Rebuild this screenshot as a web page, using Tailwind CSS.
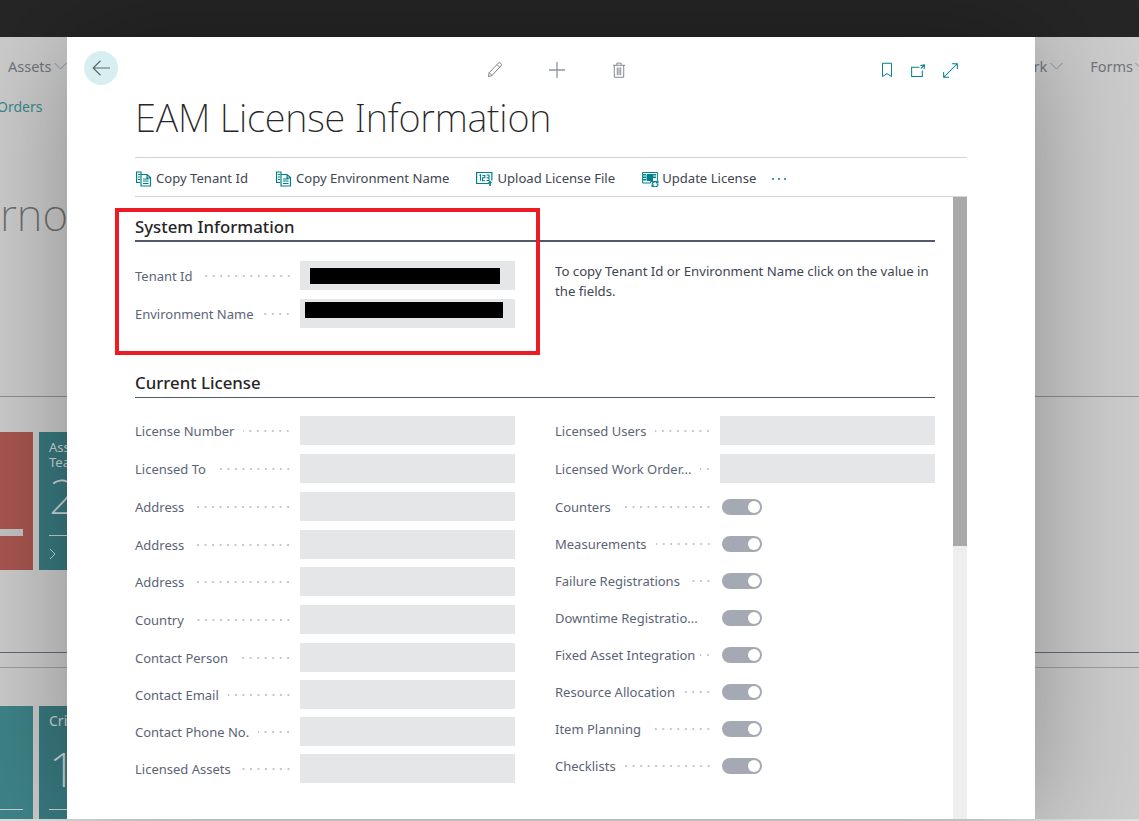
<!DOCTYPE html>
<html lang="en">
<head>
<meta charset="utf-8">
<title>EAM License Information</title>
<script src="https://cdn.jsdelivr.net/npm/@tailwindcss/browser@4"></script>
</head>
<body class="m-0 h-[821px] w-[1139px] overflow-hidden bg-[#cdcdcd] font-['Noto_Sans','Open_Sans',sans-serif]">
<div class="relative flex h-[821px] w-[1139px] flex-col overflow-hidden">
  <header class="h-[37px] shrink-0 bg-[#262626]"></header>

  <!-- dimmed page behind the dialog -->
  <div class="relative flex-1 overflow-hidden text-[#6f7680]">
    <div class="flex h-[60px] items-start justify-between pt-[19px] text-[14.500px] leading-5">
      <div class="flex items-center gap-[2px] pl-2"><span>Assets</span><svg class="h-[8px] w-[13px]" viewBox="0 0 13 8" fill="none" stroke="#8a8f96"><path d="M.5 1l6 6 6-6"/></svg></div>
      <div class="flex items-center">
        <span>ork</span><svg class="ml-[3px] h-[8px] w-[13px]" viewBox="0 0 13 8" fill="none" stroke="#8a8f96"><path d="M.5 1l6 6 6-6"/></svg>
        <span class="ml-[27px]">Forms</span><svg class="ml-[2px] mr-[-9px] h-[8px] w-[13px]" viewBox="0 0 13 8" fill="none" stroke="#8a8f96"><path d="M.5 1l6 6 6-6"/></svg>
      </div>
    </div>
    <div class="ml-[-3px] text-sm leading-5 text-[#3d8a8a]">Orders</div>
    <div class="mt-[72px] text-[44px] font-extralight leading-[50px] text-[#6f6f6f]">rno</div>
    <div class="mt-[157px] h-px bg-[#8f8f8f]"></div>
    <div class="mt-[35px] flex h-[138px] gap-[6px]">
      <div class="relative w-[33px] bg-[#a9564f]"><div class="absolute bottom-[34px] left-0 h-[7px] w-[23px] bg-[#c4c4c4]"></div></div>
      <div class="w-[100px] bg-[#397a80] pl-[10px] pt-[8px] text-[13px] leading-[15px] text-[#cfd8d8]">
        <div>Assets</div><div>Team</div>
        <div class="mt-[2px] text-[48px] font-extralight leading-[48px]">2</div>
        <div class="mt-[15px] h-px bg-[#c9d3d3]"></div>
        <svg class="mt-[12px] h-[12px] w-[8px]" viewBox="0 0 8 12" fill="none" stroke="#c9d3d3"><path d="M1 1l5 5-5 5"/></svg>
      </div>
    </div>
    <div class="mt-[82px] h-px bg-[#616a78]"></div>
    <div class="mt-[14px] h-px bg-[#a0a0a0]"></div>
    <div class="mt-[38px] flex h-[113px] gap-[6px]">
      <div class="flex w-[33px] flex-col justify-end bg-[#3e8489] pb-[9px] pr-[10px]"><div class="h-px bg-[#c9d3d3]"></div></div>
      <div class="flex w-[100px] flex-col bg-[#397a80] pb-[9px] pl-[10px] pt-[5px] text-sm text-[#cfd8d8]">
        <div>Critical</div>
        <div class="mt-[14px] text-[48px] font-extralight leading-[48px]">1</div>
        <div class="mt-auto h-px bg-[#c9d3d3]"></div>
      </div>
    </div>
  </div>
  <div class="absolute bottom-0 left-0 h-[2px] w-full bg-[#e0e0e0]"></div>

  <!-- dialog -->
  <main class="absolute left-[67px] top-[37px] flex h-[782px] w-[968px] flex-col bg-white pl-[68px] pr-[68px] shadow-[0_0_110px_rgba(0,0,0,0.32)]">
    <button class="absolute left-[17px] top-[14px] flex h-[34px] w-[34px] items-center justify-center rounded-full bg-[#d8eff2]">
      <svg class="h-[16px] w-[18px]" viewBox="0 0 18 16" fill="none" stroke="#5f6b6e" stroke-width="1.2"><path d="M1 8h17M8.500.8L1.200 8l7.300 7.200"/></svg>
    </button>

    <div class="relative flex h-[44px] shrink-0 items-end justify-center pb-[3px] pl-[10px]">
      <div class="flex items-center">
        <svg class="h-[16px] w-[16px]" viewBox="0 0 18 18" fill="none" stroke="#7d8288" stroke-width="1.100"><path d="M1.500 16.500l1-4.500L12.500 1.500c1-.9 2-.9 3 0s1 2 0 3L5.500 15.300zM2.500 12l3.300 3.300M11.300 3l3.400 3.400"/></svg>
        <svg class="ml-[46px] h-[16px] w-[16px]" viewBox="0 0 16 16" fill="none" stroke="#90959b" stroke-width="1.300"><path d="M8 0v16M0 8h16"/></svg>
        <svg class="ml-[48px] h-[16px] w-[12px]" viewBox="0 0 14 18" fill="none" stroke="#7d8288" stroke-width="1.100"><path d="M0 3.500h14M4.500 3.500V1h5v2.500M1.500 3.500v14h11v-14M5 6v9M7 6v9M9 6v9"/></svg>
      </div>
      <div class="absolute right-[9px] top-[25px] flex items-center">
        <svg class="h-[16px] w-[10px]" viewBox="0 0 11 16" fill="none" stroke="#00818a" stroke-width="1.100"><path d="M.6.6h9.800v14.600L5.500 12 .6 15.200z"/></svg>
        <svg class="ml-[19px] h-[13px] w-[15px]" viewBox="0 0 16 14" fill="none" stroke="#00818a" stroke-width="1.100"><path d="M9 3.500H.6v9.900h11.500V7M10 1.500l4.500-.5-.5 4.500M14.300 1.300L10.500 5"/></svg>
        <svg class="ml-[17px] h-[15px] w-[15px]" viewBox="0 0 16 16" fill="none" stroke="#00818a" stroke-width="1.100"><path d="M.8 15.200L15.200.8M9.500.7h5.800v5.800M.7 9.500v5.800h5.800"/></svg>
      </div>
    </div>

    <h1 class="h-[76px] shrink-0 whitespace-nowrap pt-[8px] text-[38px] font-extralight leading-[56px] tracking-[-0.2px] text-[#262626]">EAM License Information</h1>

    <nav class="flex h-[40px] shrink-0 items-center border-y border-[#d2d4d8] pt-[4px] text-[13.100px] text-[#3e4652]">
      <div class="ml-[1px] flex items-center gap-[4px]">
        <svg class="h-[16px] w-[16px]" viewBox="0 0 16 16" fill="none" stroke="#00818a" stroke-width="1.200"><path d="M5 3.500V1H.6v10.500h3.500M2 3.500h2M2 6h2M2 8.500h2"/><path d="M5 3.500h6l3.500 3V15H5zM7 8h5.500M7 10h5.500M7 12.500h5.500M11 3.500V7h3.500" /></svg>
        <span>Copy Tenant Id</span>
      </div>
      <div class="ml-[28px] flex items-center gap-[4px]">
        <svg class="h-[16px] w-[16px]" viewBox="0 0 16 16" fill="none" stroke="#00818a" stroke-width="1.200"><path d="M5 3.500V1H.6v10.500h3.500M2 3.500h2M2 6h2M2 8.500h2"/><path d="M5 3.500h6l3.500 3V15H5zM7 8h5.500M7 10h5.500M7 12.500h5.500M11 3.500V7h3.500" /></svg>
        <span>Copy Environment Name</span>
      </div>
      <div class="ml-[27px] flex items-center gap-[4px]">
        <svg class="h-[16px] w-[17px]" viewBox="0 0 17 16" fill="none" stroke="#00818a" stroke-width="1.200"><path d="M13 12.500H.6V1.500h15.300v8"/><path d="M3.500 4.500l1-.7v6M6.500 4.500h2.300v2.200H6.500v3h2.500M10.500 4h2.500v5.500h-2.500M10.500 6.700h2.500" stroke-width="1.100"/><path d="M14 9.500l2 2.500h-1.200v3h-1.600v-3H12z" fill="#00818a" stroke="none"/></svg>
        <span>Upload License File</span>
      </div>
      <div class="ml-[27px] flex items-center gap-[3px]">
        <svg class="h-[16px] w-[17px]" viewBox="0 0 17 16" fill="none" stroke="#00818a"><path d="M.6 1.500h14.800v9H8.500v1.500H.6z"/><path d="M5 3.500h5.500v6H5z" fill="#00818a"/><path d="M2.500 3v7.500M12.500 3v5" stroke-width="3" stroke-dasharray="1.500 1"/><path d="M10 13.500a3.200 3.200 0 0 1 5.500-1.800M16 13a3.200 3.200 0 0 1-5.500 2" stroke-width="1.300"/><path d="M16.500 9.500v3h-3zM9.500 16.500v-3h3z" fill="#00818a" stroke="none"/></svg>
        <span>Update License</span>
      </div>
      <div class="ml-[16px] flex items-center gap-[4px] pb-[1px]">
        <span class="h-[2px] w-[2px] rounded-full bg-[#00818a]"></span><span class="h-[2px] w-[2px] rounded-full bg-[#00818a]"></span><span class="h-[2px] w-[2px] rounded-full bg-[#00818a]"></span>
      </div>
    </nav>

    <div class="flex min-h-0 flex-1">
      <div class="min-w-0 flex-1 pr-[18px] text-[13px] text-[#5b6477]">
        <section class="pt-[18px]">
          <h2 class="h-[27px] border-b-2 border-[#505a6b] text-[16.800px] font-medium leading-[24px] text-[#262626]">System Information</h2>
          <div class="mt-[19px] grid grid-cols-2 gap-x-[40px]">
            <div class="flex flex-col gap-[9px]">
              <div class="flex h-[29px] items-center">
                <span class="whitespace-nowrap pt-[2px]">Tenant Id</span>
                <span class="ml-[9px] mr-[8px] h-[4px] flex-1 bg-[radial-gradient(circle,#c3c7cd_0.8px,transparent_1.1px)] bg-[length:7.500px_4px] bg-right bg-repeat-x"></span>
                <div class="flex h-[29px] w-[215px] shrink-0 items-center bg-[#e5e6e8] pl-[10px]"><div class="h-[16px] w-[190px] bg-black"></div></div>
              </div>
              <div class="flex h-[29px] items-center">
                <span class="whitespace-nowrap pt-[2px]">Environment Name</span>
                <span class="ml-[9px] mr-[8px] h-[4px] flex-1 bg-[radial-gradient(circle,#c3c7cd_0.8px,transparent_1.1px)] bg-[length:7.500px_4px] bg-right bg-repeat-x"></span>
                <div class="flex h-[29px] w-[215px] shrink-0 items-start bg-[#e5e6e8] pl-[5px] pt-[3px]"><div class="h-[16px] w-[198px] bg-black"></div></div>
              </div>
            </div>
            <p class="text-[13.200px] leading-[20px] text-[#3e4652]">To copy Tenant Id or Environment Name click on the value in the fields.</p>
          </div>
        </section>

        <section class="mt-[44px]">
          <h2 class="h-[26px] border-b border-[#505a6b] text-[16.800px] font-medium leading-[22px] text-[#262626]">Current License</h2>
          <div class="mt-[18px] grid grid-cols-2 gap-x-[40px]">
            <div class="flex flex-col">
              <div class="flex h-[29px] items-center"><span class="whitespace-nowrap pt-[2px]">License Number</span><span class="ml-[9px] mr-[8px] h-[4px] flex-1 bg-[radial-gradient(circle,#c3c7cd_0.8px,transparent_1.1px)] bg-[length:7.500px_4px] bg-right bg-repeat-x"></span><div class="h-[29px] w-[215px] shrink-0 bg-[#e5e6e8]"></div></div>
              <div class="mt-[9px] flex h-[29px] items-center"><span class="whitespace-nowrap pt-[2px]">Licensed To</span><span class="ml-[9px] mr-[8px] h-[4px] flex-1 bg-[radial-gradient(circle,#c3c7cd_0.8px,transparent_1.1px)] bg-[length:7.500px_4px] bg-right bg-repeat-x"></span><div class="h-[29px] w-[215px] shrink-0 bg-[#e5e6e8]"></div></div>
              <div class="mt-[9px] flex h-[29px] items-center"><span class="whitespace-nowrap pt-[2px]">Address</span><span class="ml-[9px] mr-[8px] h-[4px] flex-1 bg-[radial-gradient(circle,#c3c7cd_0.8px,transparent_1.1px)] bg-[length:7.500px_4px] bg-right bg-repeat-x"></span><div class="h-[29px] w-[215px] shrink-0 bg-[#e5e6e8]"></div></div>
              <div class="mt-[9px] flex h-[29px] items-center"><span class="whitespace-nowrap pt-[2px]">Address</span><span class="ml-[9px] mr-[8px] h-[4px] flex-1 bg-[radial-gradient(circle,#c3c7cd_0.8px,transparent_1.1px)] bg-[length:7.500px_4px] bg-right bg-repeat-x"></span><div class="h-[29px] w-[215px] shrink-0 bg-[#e5e6e8]"></div></div>
              <div class="mt-[8px] flex h-[29px] items-center"><span class="whitespace-nowrap pt-[2px]">Address</span><span class="ml-[9px] mr-[8px] h-[4px] flex-1 bg-[radial-gradient(circle,#c3c7cd_0.8px,transparent_1.1px)] bg-[length:7.500px_4px] bg-right bg-repeat-x"></span><div class="h-[29px] w-[215px] shrink-0 bg-[#e5e6e8]"></div></div>
              <div class="mt-[9px] flex h-[29px] items-center"><span class="whitespace-nowrap pt-[2px]">Country</span><span class="ml-[9px] mr-[8px] h-[4px] flex-1 bg-[radial-gradient(circle,#c3c7cd_0.8px,transparent_1.1px)] bg-[length:7.500px_4px] bg-right bg-repeat-x"></span><div class="h-[29px] w-[215px] shrink-0 bg-[#e5e6e8]"></div></div>
              <div class="mt-[9px] flex h-[29px] items-center"><span class="whitespace-nowrap pt-[2px]">Contact Person</span><span class="ml-[9px] mr-[8px] h-[4px] flex-1 bg-[radial-gradient(circle,#c3c7cd_0.8px,transparent_1.1px)] bg-[length:7.500px_4px] bg-right bg-repeat-x"></span><div class="h-[29px] w-[215px] shrink-0 bg-[#e5e6e8]"></div></div>
              <div class="mt-[8px] flex h-[29px] items-center"><span class="whitespace-nowrap pt-[2px]">Contact Email</span><span class="ml-[9px] mr-[8px] h-[4px] flex-1 bg-[radial-gradient(circle,#c3c7cd_0.8px,transparent_1.1px)] bg-[length:7.500px_4px] bg-right bg-repeat-x"></span><div class="h-[29px] w-[215px] shrink-0 bg-[#e5e6e8]"></div></div>
              <div class="mt-[8px] flex h-[29px] items-center"><span class="whitespace-nowrap pt-[2px]">Contact Phone No.</span><span class="ml-[9px] mr-[8px] h-[4px] flex-1 bg-[radial-gradient(circle,#c3c7cd_0.8px,transparent_1.1px)] bg-[length:7.500px_4px] bg-right bg-repeat-x"></span><div class="h-[29px] w-[215px] shrink-0 bg-[#e5e6e8]"></div></div>
              <div class="mt-[8px] flex h-[29px] items-center"><span class="whitespace-nowrap pt-[2px]">Licensed Assets</span><span class="ml-[9px] mr-[8px] h-[4px] flex-1 bg-[radial-gradient(circle,#c3c7cd_0.8px,transparent_1.1px)] bg-[length:7.500px_4px] bg-right bg-repeat-x"></span><div class="h-[29px] w-[215px] shrink-0 bg-[#e5e6e8]"></div></div>
            </div>
            <div class="flex flex-col">
              <div class="flex h-[29px] items-center"><span class="whitespace-nowrap pt-[2px]">Licensed Users</span><span class="ml-[9px] mr-[8px] h-[4px] flex-1 bg-[radial-gradient(circle,#c3c7cd_0.8px,transparent_1.1px)] bg-[length:7.500px_4px] bg-right bg-repeat-x"></span><div class="h-[29px] w-[215px] shrink-0 bg-[#e5e6e8]"></div></div>
              <div class="mt-[9px] flex h-[29px] items-center"><span class="whitespace-nowrap pt-[2px]">Licensed Work Order...</span><span class="ml-[9px] mr-[8px] h-[4px] flex-1 bg-[radial-gradient(circle,#c3c7cd_0.8px,transparent_1.1px)] bg-[length:7.500px_4px] bg-right bg-repeat-x"></span><div class="h-[29px] w-[215px] shrink-0 bg-[#e5e6e8]"></div></div>
              <div class="mt-[9px] flex h-[29px] items-center"><span class="whitespace-nowrap pt-[2px]">Counters</span><span class="ml-[9px] mr-[8px] h-[4px] flex-1 bg-[radial-gradient(circle,#c3c7cd_0.8px,transparent_1.1px)] bg-[length:7.500px_4px] bg-right bg-repeat-x"></span><div class="flex h-[29px] w-[215px] shrink-0 items-center pl-[2px]"><div class="flex h-[16px] w-[40px] items-center justify-end rounded-full bg-[#a5a9b3] pr-[2px]"><div class="h-[12px] w-[12px] rounded-full bg-white"></div></div></div></div>
              <div class="mt-[8px] flex h-[29px] items-center"><span class="whitespace-nowrap pt-[2px]">Measurements</span><span class="ml-[9px] mr-[8px] h-[4px] flex-1 bg-[radial-gradient(circle,#c3c7cd_0.8px,transparent_1.1px)] bg-[length:7.500px_4px] bg-right bg-repeat-x"></span><div class="flex h-[29px] w-[215px] shrink-0 items-center pl-[2px]"><div class="flex h-[16px] w-[40px] items-center justify-end rounded-full bg-[#a5a9b3] pr-[2px]"><div class="h-[12px] w-[12px] rounded-full bg-white"></div></div></div></div>
              <div class="mt-[8px] flex h-[29px] items-center"><span class="whitespace-nowrap pt-[2px]">Failure Registrations</span><span class="ml-[9px] mr-[8px] h-[4px] flex-1 bg-[radial-gradient(circle,#c3c7cd_0.8px,transparent_1.1px)] bg-[length:7.500px_4px] bg-right bg-repeat-x"></span><div class="flex h-[29px] w-[215px] shrink-0 items-center pl-[2px]"><div class="flex h-[16px] w-[40px] items-center justify-end rounded-full bg-[#a5a9b3] pr-[2px]"><div class="h-[12px] w-[12px] rounded-full bg-white"></div></div></div></div>
              <div class="mt-[8px] flex h-[29px] items-center"><span class="whitespace-nowrap pt-[2px]">Downtime Registratio...</span><span class="mr-[8px] h-[4px] flex-1"></span><div class="flex h-[29px] w-[215px] shrink-0 items-center pl-[2px]"><div class="flex h-[16px] w-[40px] items-center justify-end rounded-full bg-[#a5a9b3] pr-[2px]"><div class="h-[12px] w-[12px] rounded-full bg-white"></div></div></div></div>
              <div class="mt-[8px] flex h-[29px] items-center"><span class="whitespace-nowrap pt-[2px]">Fixed Asset Integration</span><span class="ml-[5px] mr-[8px] h-[4px] flex-1 bg-[radial-gradient(circle,#c3c7cd_0.8px,transparent_1.1px)] bg-[length:7.500px_4px] bg-right bg-repeat-x"></span><div class="flex h-[29px] w-[215px] shrink-0 items-center pl-[2px]"><div class="flex h-[16px] w-[40px] items-center justify-end rounded-full bg-[#a5a9b3] pr-[2px]"><div class="h-[12px] w-[12px] rounded-full bg-white"></div></div></div></div>
              <div class="mt-[8px] flex h-[29px] items-center"><span class="whitespace-nowrap pt-[2px]">Resource Allocation</span><span class="ml-[9px] mr-[8px] h-[4px] flex-1 bg-[radial-gradient(circle,#c3c7cd_0.8px,transparent_1.1px)] bg-[length:7.500px_4px] bg-right bg-repeat-x"></span><div class="flex h-[29px] w-[215px] shrink-0 items-center pl-[2px]"><div class="flex h-[16px] w-[40px] items-center justify-end rounded-full bg-[#a5a9b3] pr-[2px]"><div class="h-[12px] w-[12px] rounded-full bg-white"></div></div></div></div>
              <div class="mt-[8px] flex h-[29px] items-center"><span class="whitespace-nowrap pt-[2px]">Item Planning</span><span class="ml-[9px] mr-[8px] h-[4px] flex-1 bg-[radial-gradient(circle,#c3c7cd_0.8px,transparent_1.1px)] bg-[length:7.500px_4px] bg-right bg-repeat-x"></span><div class="flex h-[29px] w-[215px] shrink-0 items-center pl-[2px]"><div class="flex h-[16px] w-[40px] items-center justify-end rounded-full bg-[#a5a9b3] pr-[2px]"><div class="h-[12px] w-[12px] rounded-full bg-white"></div></div></div></div>
              <div class="mt-[8px] flex h-[29px] items-center"><span class="whitespace-nowrap pt-[2px]">Checklists</span><span class="ml-[9px] mr-[8px] h-[4px] flex-1 bg-[radial-gradient(circle,#c3c7cd_0.8px,transparent_1.1px)] bg-[length:7.500px_4px] bg-right bg-repeat-x"></span><div class="flex h-[29px] w-[215px] shrink-0 items-center pl-[2px]"><div class="flex h-[16px] w-[40px] items-center justify-end rounded-full bg-[#a5a9b3] pr-[2px]"><div class="h-[12px] w-[12px] rounded-full bg-white"></div></div></div></div>
            </div>
          </div>
        </section>
      </div>
      <div class="w-[14px] shrink-0 bg-[#eeeeee]"><div class="h-[349px] bg-[#a9a9a9]"></div></div>
    </div>
  </main>

  <!-- red annotation -->
  <div class="absolute left-[115px] top-[208px] h-[147px] w-[425px] border-[4px] border-[#ed1c24]"></div>
</div>
</body>
</html>
